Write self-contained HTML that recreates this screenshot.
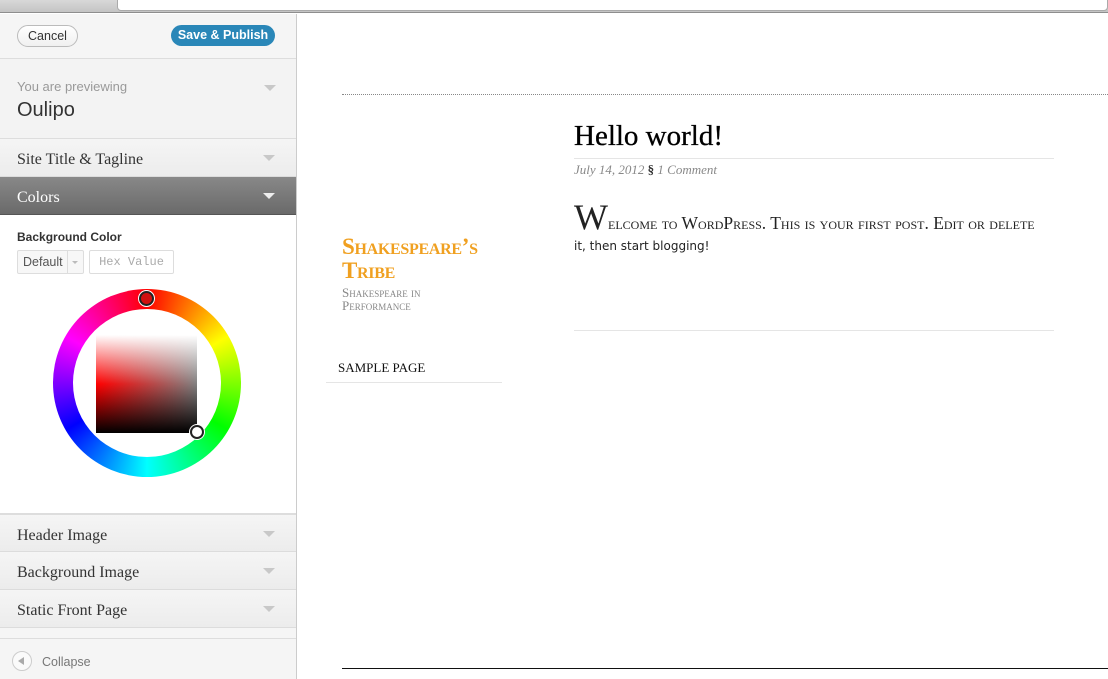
<!DOCTYPE html>
<html><head><meta charset="utf-8"><style>
*{margin:0;padding:0;box-sizing:border-box}
body{width:1108px;height:679px;overflow:hidden;background:#fff;font-family:"Liberation Sans",sans-serif;position:relative}
.abs{position:absolute}
#bar{left:0;top:0;width:1108px;height:13px;background:linear-gradient(#d8d8d8,#c4c4c4);border-bottom:1px solid #8e8e8e}
#url{left:117px;top:-6px;width:991px;height:17px;background:#fff;border:1px solid #aaa;border-radius:4px}
#side{left:0;top:14px;width:297px;height:665px;background:#f5f5f5;border-right:1px solid #ccc}
.row{position:absolute;left:0;width:296px;border-bottom:1px solid #dcdcdc;font-family:"Liberation Serif",serif;font-size:16px;color:#333;padding-left:17px;padding-top:2px;background:linear-gradient(#f5f5f5,#ececec)}
.tri{position:absolute;right:21px;width:0;height:0;border-left:6px solid transparent;border-right:6px solid transparent;border-top:6px solid #c8c8c8}
.btn{position:absolute;border-radius:12px;font-size:12.5px;text-align:center;line-height:20px}
</style></head><body>
<div id="bar" class="abs"></div><div id="url" class="abs"></div>
<div id="side" class="abs"></div>
<div class="abs" style="left:0;top:14px;width:296px;height:45px;border-bottom:1px solid #ddd;background:#f5f5f5"></div>
<div class="btn" style="left:17px;top:25px;width:61px;height:22px;border:1px solid #bbb;background:linear-gradient(#fff,#f0f0f0);color:#333">Cancel</div>
<div class="btn" style="left:171px;top:25px;width:104px;height:21px;line-height:21px;background:#2a87b8;color:#fff;font-weight:bold">Save &amp; Publish</div>
<div class="abs" style="left:0;top:59px;width:296px;height:80px;background:#f3f3f3;border-bottom:1px solid #ddd"></div>
<div class="abs" style="left:17px;top:79px;font-size:13px;color:#999">You are previewing</div>
<div class="abs" style="left:17px;top:99px;font-size:20px;color:#333">Oulipo</div>
<div class="tri" style="left:264px;top:85px"></div>
<div class="row" style="top:139px;height:38px;line-height:38px">Site Title &amp; Tagline<div class="tri" style="top:16px"></div></div>
<div class="row" style="top:177px;height:38px;line-height:38px;background:linear-gradient(#888,#6a6a6a);color:#fff;border-bottom:1px solid #555">Colors<div class="tri" style="top:16px;border-top-color:#eee"></div></div>
<div class="abs" style="left:0;top:215px;width:296px;height:299px;background:#fff;border-bottom:1px solid #ddd"></div>
<div class="abs" style="left:17px;top:230px;font-size:12px;font-weight:bold;color:#333">Background Color</div>
<div class="abs" style="left:17px;top:250px;width:67px;height:24px;border:1px solid #ddd;border-radius:2px;background:#f7f7f7;font-size:12.5px;color:#555;line-height:22px;padding-left:5px">Default</div>
<div class="abs" style="left:67px;top:251px;width:1px;height:22px;background:#ddd"></div>
<div class="abs" style="left:72px;top:261px;border-left:3px solid transparent;border-right:3px solid transparent;border-top:3px solid #bbb"></div>
<div class="abs" style="left:89px;top:250px;width:85px;height:24px;border:1px solid #ddd;border-radius:2px;font-family:'Liberation Mono',monospace;font-size:12px;color:#aaa;line-height:22px;text-align:center">Hex Value</div>
<div class="abs" style="left:53px;top:289px;width:188px;height:188px;border-radius:50%;background:conic-gradient(#f00,#ff0 60deg,#0f0 120deg,#0ff 180deg,#00f 240deg,#f0f 300deg,#f00 360deg)"></div>
<div class="abs" style="left:73px;top:309px;width:148px;height:148px;border-radius:50%;background:#fff"></div>
<div class="abs" style="left:96px;top:335px;width:101px;height:98px;background:linear-gradient(to bottom,#fff 0%,rgba(255,255,255,0) 50%,rgba(0,0,0,0) 50%,#000 100%),linear-gradient(to right,#f00,#808080)"></div>
<div class="abs" style="left:139px;top:291px;width:15px;height:15px;border-radius:50%;border:2px solid #222;background:#d01010;box-shadow:0 0 0 1px #fff"></div>
<div class="abs" style="left:190px;top:425px;width:14px;height:14px;border-radius:50%;border:2px solid #222;background:#fff;box-shadow:0 0 0 1px #fff"></div>
<div class="row" style="top:514px;height:38px;line-height:38px;border-top:1px solid #ddd">Header Image<div class="tri" style="top:16px"></div></div>
<div class="row" style="top:552px;height:38px;line-height:38px">Background Image<div class="tri" style="top:16px"></div></div>
<div class="row" style="top:590px;height:38px;line-height:38px">Static Front Page<div class="tri" style="top:16px"></div></div>
<div class="abs" style="left:0;top:638px;width:296px;height:1px;background:#ddd"></div>
<div class="abs" style="left:12px;top:651px;width:20px;height:20px;border-radius:50%;border:1px solid #ccc;background:#fafafa"></div>
<div class="abs" style="left:18px;top:657px;border-top:4px solid transparent;border-bottom:4px solid transparent;border-right:6px solid #aaa"></div>
<div class="abs" style="left:42px;top:655px;font-size:12.5px;color:#777">Collapse</div>

<div class="abs" style="left:342px;top:94px;width:766px;border-top:1px dotted #888"></div>
<div class="abs" style="left:342px;top:668px;width:766px;height:1px;background:#111"></div>
<div class="abs" style="left:574px;top:120px;font-family:'Liberation Serif',serif;font-size:29px;color:#000;-webkit-text-stroke:0.3px #000">Hello world!</div>
<div class="abs" style="left:574px;top:158px;width:480px;height:1px;background:#e5e5e5"></div>
<div class="abs" style="left:574px;top:162px;font-family:'Liberation Serif',serif;font-style:italic;font-size:13px;color:#888">July 14, 2012 <span style="color:#333;font-style:normal;font-weight:bold">§</span> 1 Comment</div>
<div class="abs" style="left:574px;top:203px;font-family:'Liberation Serif',serif;font-variant:small-caps;font-size:17.5px;color:#222;white-space:nowrap"><span style="font-size:36px;line-height:28px">W</span>elcome to WordPress. This is your first post. Edit or delete</div>
<div class="abs" style="left:574px;top:239px;font-family:'DejaVu Sans',sans-serif;font-size:12px;color:#222">it, then start blogging!</div>
<div class="abs" style="left:574px;top:330px;width:480px;height:1px;background:#e5e5e5"></div>
<div class="abs" style="left:342px;top:235px;font-family:'Liberation Serif',serif;font-variant:small-caps;font-size:23px;line-height:24px;color:#f0a020;font-weight:bold;letter-spacing:-0.3px">Shakespeare’s<br>Tribe</div>
<div class="abs" style="left:342px;top:286px;font-family:'Liberation Serif',serif;font-variant:small-caps;font-size:13px;line-height:13px;color:#888">Shakespeare in<br>Performance</div>
<div class="abs" style="left:338px;top:360px;font-family:'Liberation Serif',serif;font-size:13px;color:#111">SAMPLE PAGE</div>
<div class="abs" style="left:326px;top:382px;width:176px;height:1px;background:#e5e5e5"></div>
</body></html>
